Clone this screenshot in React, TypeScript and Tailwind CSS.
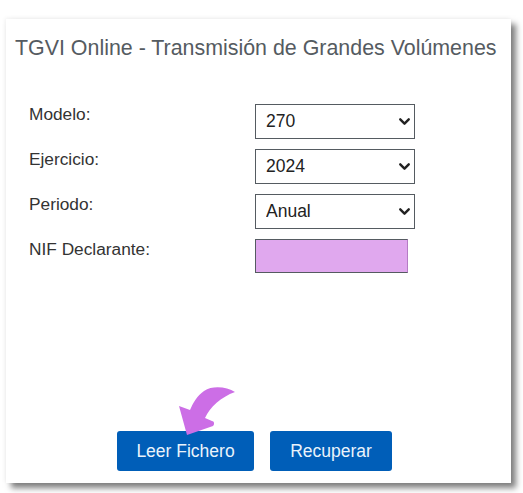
import { ChevronDown } from 'lucide-react';

const labelClass = 'mt-[1px] w-[226px] text-[17.3px] leading-[18px] text-[#333]';
const selectClass =
  'h-[35px] w-[160px] appearance-none border border-[#555b61] bg-white pl-[10px] text-[17.5px] text-[#222]';

function Row({ label, children, className }: { label: string; children: React.ReactNode; className: string }) {
  return (
    <div className={`flex items-start ${className}`}>
      <span className={labelClass}>{label}</span>
      {children}
    </div>
  );
}

function Dropdown({ value }: { value: string }) {
  return (
    <div className="relative h-[35px] w-[160px]">
      <select className={selectClass} defaultValue={value}>
        <option>{value}</option>
      </select>
      <ChevronDown className="pointer-events-none absolute right-[2px] top-[9px] h-[17px] w-[17px] text-[#222]" strokeWidth={3.4} />
    </div>
  );
}

function Arrow() {
  return (
    <svg className="absolute left-[60px] top-[-46px]" width="60" height="52" viewBox="0 0 60 52">
      <path
        d="M58 7 C50 2 36 0 27 6 C20 11 16 18 13 25 L2 21 L10 50 L36 41 C38 39 37 36 35 36 L28 33 C33 22 44 12 58 7 Z"
        fill="#cc6ee6"
      />
    </svg>
  );
}

export default function App() {
  return (
    <div className="h-[493px] w-[523px] bg-white pl-[6px] pt-[19px] font-['Liberation_Sans',Arial,sans-serif]">
      <div className="flex h-[464px] w-[505px] flex-col bg-white pl-[9px] shadow-[5px_5px_6px_rgba(0,0,0,0.5),-1px_-1px_4px_rgba(0,0,0,0.06)]">
        <h1 className="mt-[18px] whitespace-nowrap text-[21.4px] leading-[23px] font-normal text-[#555b61]">
          TGVI Online - Transmisión de Grandes Volúmenes
        </h1>
        <div className="mt-[44px] flex flex-col pl-[14px]">
          <Row label="Modelo:" className="h-[45px]">
            <Dropdown value="270" />
          </Row>
          <Row label="Ejercicio:" className="h-[45px]">
            <Dropdown value="2024" />
          </Row>
          <Row label="Periodo:" className="h-[45px]">
            <Dropdown value="Anual" />
          </Row>
          <Row label="NIF Declarante:" className="h-[34px]">
            <input className="h-[34px] w-[153px] border border-[#555b61] border-r-[#b57cc4] bg-[#e0a8ee]" />
          </Row>
        </div>
        <div className="relative mt-[158px] ml-[102px] flex gap-[16px]">
          <Arrow />
          <button className="h-[40px] w-[137px] rounded-[3px] bg-[#005eb8] text-[17.5px] text-[#eaf3fb]">
            Leer Fichero
          </button>
          <button className="h-[40px] w-[122px] rounded-[3px] bg-[#005eb8] text-[17.5px] text-[#eaf3fb]">
            Recuperar
          </button>
        </div>
      </div>
    </div>
  );
}
